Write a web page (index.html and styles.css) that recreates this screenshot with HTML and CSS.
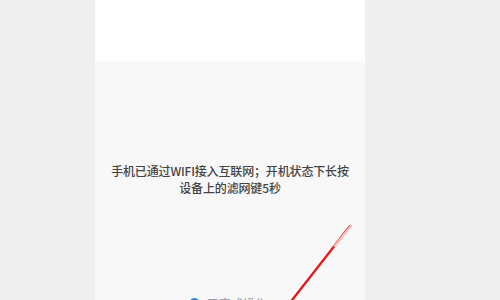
FILE: index.html
```html
<!DOCTYPE html>
<html lang="zh">
<head>
<meta charset="utf-8">
<link rel="stylesheet" href="styles.css">
</head>
<body>
<div class="stage">
  <div class="phone">
    <div class="top"></div>
    <div class="content">
      <p class="msg">手机已通过WIFI接入互联网；开机状态下长按<br>设备上的滤网键5秒</p>
      <div class="check"><span class="dot"></span><span class="label">已完成操作</span></div>
    </div>
    <svg class="arrow" width="80" height="90" viewBox="0 0 80 90">
      <line x1="65" y1="8" x2="4" y2="86" stroke="#ffffff" stroke-width="5.5" stroke-linecap="round" opacity="0.95"/>
      <line x1="65" y1="8" x2="4" y2="86" stroke="#e81818" stroke-width="2.4" stroke-linecap="round"/>
      <line x1="66" y1="8" x2="50" y2="28" stroke="#f2c4c4" stroke-width="2.6" stroke-linecap="round"/>
    </svg>
  </div>
</div>
</body>
</html>
```

FILE: styles.css
```css
html, body {
  margin: 0;
  padding: 0;
}
body {
  background: #efefef;
  width: 500px;
  height: 300px;
  overflow: hidden;
  font-family: "Noto Sans CJK SC", "Noto Sans", sans-serif;
}
.stage {
  display: flex;
  height: 300px;
  padding-left: 95px;
}
.phone {
  position: relative;
  width: 270px;
  height: 300px;
  display: flex;
  flex-direction: column;
  background: #f8f8f8;
}
.top {
  height: 61px;
  background: #ffffff;
  flex: none;
}
.content {
  flex: 1;
  display: flex;
  flex-direction: column;
  align-items: center;
}
.msg {
  margin: 101px 0 0;
  font-size: 12px;
  font-weight: 500;
  line-height: 17px;
  color: #444444;
  text-align: center;
  letter-spacing: -0.15px;
}
.check {
  margin-top: 99px;
  margin-left: -4px;
  display: flex;
  align-items: center;
  gap: 7px;
}
.dot {
  width: 11px;
  height: 11px;
  border-radius: 50%;
  background: #2f7ed8;
}
.label {
  font-size: 12px;
  color: #8f9aa6;
}
.arrow {
  position: absolute;
  left: 190px;
  top: 218px;
}
```
